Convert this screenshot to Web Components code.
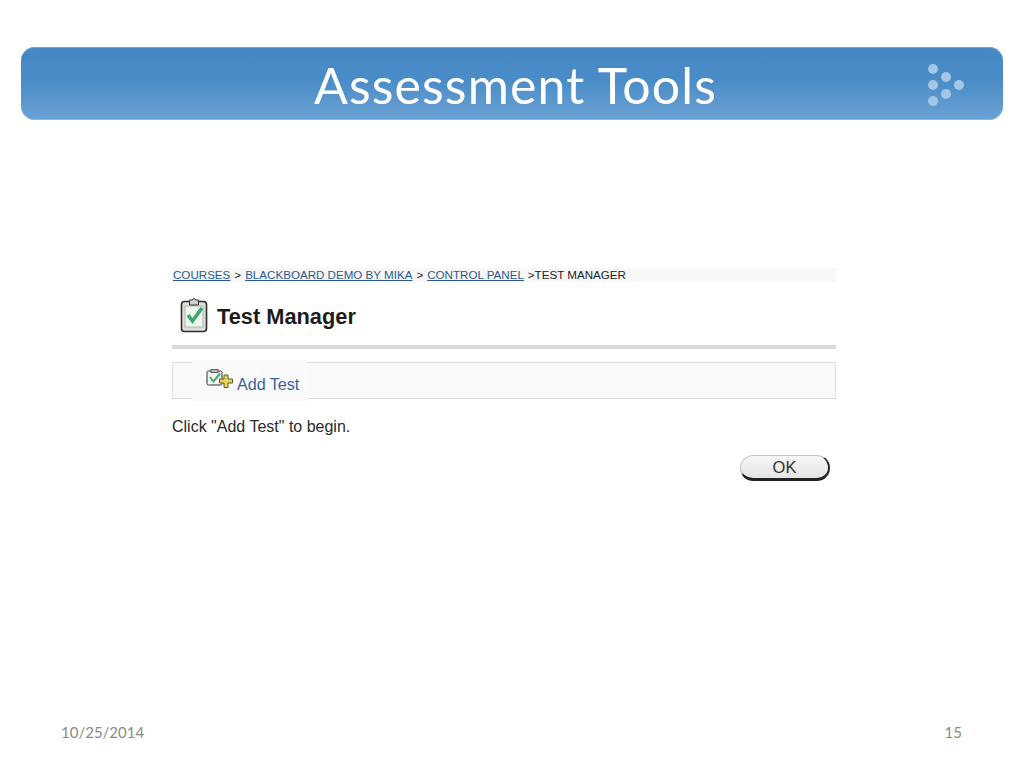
<!DOCTYPE html>
<html>
<head>
<meta charset="utf-8">
<title>Assessment Tools</title>
<style>
  html, body { margin: 0; padding: 0; background: #fff; }
</style>
</head>
<body>
<slide-page>
  <slide-banner slot="banner">Assessment Tools</slide-banner>
  <test-manager slot="content"></test-manager>
  <slide-footer slot="footer" date="10/25/2014" number="15"></slide-footer>
</slide-page>

<script>
// Outer slide frame: banner on top, content in the middle, footer at the bottom
class SlidePage extends HTMLElement {
  constructor() {
    super();
    this.attachShadow({ mode: 'open' });
  }

  connectedCallback() {
    this.shadowRoot.innerHTML = `
      <style>
        :host {
          display: flex;
          flex-direction: column;
          width: 1024px;
          height: 768px;
          box-sizing: border-box;
          padding: 47px 21px 0;
          overflow: hidden;
          background: #fff;
        }
        .content {
          display: flex;
          justify-content: flex-start;
          padding: 148px 0 0 151px;
        }
        .footer {
          margin-top: auto;
        }
      </style>
      <slot name="banner"></slot>
      <div class="content"><slot name="content"></slot></div>
      <div class="footer"><slot name="footer"></slot></div>
    `;
  }
}

class SlideBanner extends HTMLElement {
  constructor() {
    super();
    this.attachShadow({ mode: 'open' });
  }

  connectedCallback() {
    this.shadowRoot.innerHTML = `
      <style>
        :host {
          display: grid;
          grid-template-columns: 1fr auto 1fr;
          align-items: center;
          height: 73px;
          border-radius: 14px;
          background: linear-gradient(180deg, #4488c4 0%, #4a8cc7 45%, #6aa2d4 100%);
          box-shadow: inset 0 1px 0 #6ea4d4, inset 0 -1px 0 #8ab8de;
          color: #fff;
          font-family: Lato, sans-serif;
        }
        .title {
          grid-column: 2;
          padding-left: 7px;
          font-size: 50px;
          line-height: 76px;
          letter-spacing: 1.15px;
          white-space: nowrap;
        }
        .dots {
          grid-column: 3;
          justify-self: end;
          display: block;
          margin-right: 36px;
        }
      </style>
      <div class="title"><slot></slot></div>
      <svg class="dots" width="40" height="44" viewBox="0 0 40 44" fill="#a4c5e3">
        <circle cx="6" cy="6" r="5"/>
        <circle cx="19" cy="14" r="5"/>
        <circle cx="6" cy="22" r="5"/>
        <circle cx="32" cy="22" r="5"/>
        <circle cx="19" cy="31" r="5"/>
        <circle cx="6" cy="38" r="5"/>
      </svg>
    `;
  }
}

class BreadCrumbs extends HTMLElement {
  constructor() {
    super();
    this.attachShadow({ mode: 'open' });
  }

  connectedCallback() {
    this.shadowRoot.innerHTML = `
      <style>
        :host {
          display: flex;
          align-items: flex-start;
          height: 14px;
          line-height: 13px;
          padding-left: 1px;
          background: #f7f7f7;
          font-family: "Liberation Sans", sans-serif;
          font-size: 11.6px;
          color: #222;
          white-space: nowrap;
        }
        a {
          color: #2a5a92;
          text-decoration: underline;
        }
        .sep { margin: 0 4px; }
      </style>
      <a>COURSES</a><span class="sep">&gt;</span><a>BLACKBOARD DEMO BY MIKA</a><span class="sep">&gt;</span><a>CONTROL PANEL</a><span style="margin-left:4px">&gt;TEST MANAGER</span>
    `;
  }
}

// The pasted Blackboard "Test Manager" panel
class TestManager extends HTMLElement {
  constructor() {
    super();
    this.attachShadow({ mode: 'open' });
  }

  connectedCallback() {
    this.shadowRoot.innerHTML = `
      <style>
        :host {
          display: flex;
          flex-direction: column;
          width: 664px;
          font-family: "Liberation Sans", sans-serif;
          color: #222;
        }
        .heading {
          display: flex;
          align-items: center;
          gap: 9px;
          height: 67px;
          box-sizing: border-box;
          padding: 6px 0 0 8px;
          border-bottom: 4px solid #d9d9d9;
          font-size: 21.8px;
          font-weight: bold;
          color: #1c1c1c;
        }
        .heading svg { margin-top: -3px; }
        .bar {
          display: flex;
          height: 37px;
          box-sizing: border-box;
          margin-top: 13px;
          padding-left: 19px;
          background: #f9f9f9;
          border: 1px solid #dedede;
        }
        .add {
          display: flex;
          align-items: flex-end;
          gap: 3px;
          height: 42px;
          box-sizing: border-box;
          margin-top: -3px;
          padding: 0 8px 8px 14px;
          background: #fafafa;
          color: #37629b;
          font-size: 16.1px;
        }
        .add svg { margin-bottom: 5px; }
        .hint {
          margin-top: 19px;
          font-size: 16px;
          line-height: 17px;
          color: #2a2a2a;
        }
        .actions {
          display: flex;
          justify-content: flex-end;
          margin-top: 20px;
          padding-right: 6px;
        }
        .ok {
          display: flex;
          align-items: center;
          justify-content: center;
          width: 90px;
          height: 26px;
          box-sizing: border-box;
          border-radius: 13px;
          border: 1px solid #c4c4c4;
          border-right: 2px solid #222;
          border-bottom: 3px solid #222;
          background: linear-gradient(#f6f6f6, #e4e4e4);
          font-size: 16.5px;
          color: #333;
        }
      </style>
      <bread-crumbs></bread-crumbs>
      <div class="heading">
        <svg width="28" height="36" viewBox="0 0 28 36">
          <rect x="1.500" y="4.500" width="25" height="30" rx="3" fill="#dedfdb" stroke="#2b2b2b" stroke-width="1.600"/>
          <rect x="5" y="9" width="18" height="21" fill="#eef5ef" stroke="#a9b8ae"/>
          <path d="M9.500 4.500 V3 H12 Q14 0 16 3 H18.500 V8 H9.500 Z" fill="#cfcfcf" stroke="#333"/>
          <path d="M8 18 L12.500 24 L22 11" fill="none" stroke="#3aa76d" stroke-width="3.600"/>
        </svg>
        <span>Test Manager</span>
      </div>
      <div class="bar">
        <div class="add">
          <svg width="28" height="20" viewBox="0 0 28 20">
            <rect x="1" y="2" width="15" height="14" rx="1.500" fill="#f2f2f0" stroke="#333"/>
            <rect x="5" y=".5" width="7" height="3" fill="#bbb" stroke="#444" stroke-width=".8"/>
            <path d="M4 8 L7.500 12.500 L14 4.500" fill="none" stroke="#46a86c" stroke-width="2"/>
            <path d="M18 6 H22 V10 H26.500 V14 H22 V18.500 H18 V14 H13.500 V10 H18 Z" fill="#e6d25c" stroke="#5e5a2a"/>
          </svg>
          <span>Add Test</span>
        </div>
      </div>
      <div class="hint">Click "Add Test" to begin.</div>
      <div class="actions"><div class="ok">OK</div></div>
    `;
  }
}

class SlideFooter extends HTMLElement {
  constructor() {
    super();
    this.attachShadow({ mode: 'open' });
  }

  connectedCallback() {
    this.shadowRoot.innerHTML = `
      <style>
        :host {
          display: flex;
          justify-content: space-between;
          padding: 0 41px 26px 40px;
          font-family: Lato, sans-serif;
          font-size: 15px;
          line-height: 19px;
          color: #8a8a8a;
        }
      </style>
      <span>${this.getAttribute('date')}</span>
      <span>${this.getAttribute('number')}</span>
    `;
  }
}

customElements.define('slide-page', SlidePage);
customElements.define('slide-banner', SlideBanner);
customElements.define('bread-crumbs', BreadCrumbs);
customElements.define('test-manager', TestManager);
customElements.define('slide-footer', SlideFooter);
</script>
</body>
</html>
